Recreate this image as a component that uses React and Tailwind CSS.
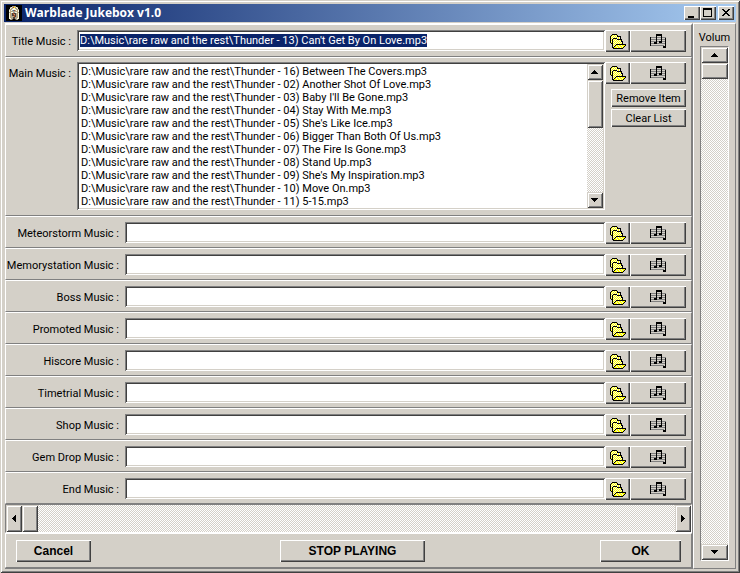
import { useEffect, useRef } from 'react';

const raised = 'bg-[#d4d0c8] shadow-[inset_1px_1px_#fff,inset_-1px_-1px_#404040,inset_-2px_-2px_#808080]';
const scrollRaised =
  'bg-[#d4d0c8] shadow-[inset_1px_1px_#d4d0c8,inset_-1px_-1px_#404040,inset_2px_2px_#fff,inset_-2px_-2px_#808080]';
const sunken = 'bg-white shadow-[inset_1px_1px_#808080,inset_-1px_-1px_#fff,inset_2px_2px_#404040,inset_-2px_-2px_#d4d0c8]';
const dither = 'bg-[repeating-conic-gradient(#fff_0_25%,#d4d0c8_0_50%)] bg-[length:2px_2px]';
const panel = 'border border-t-white border-l-white border-r-[#808080] border-b-[#808080]';

const songs = [
  '16) Between The Covers',
  '02) Another Shot Of Love',
  "03) Baby I'll Be Gone",
  '04) Stay With Me',
  "05) She's Like Ice",
  '06) Bigger Than Both Of Us',
  '07) The Fire Is Gone',
  '08) Stand Up',
  "09) She's My Inspiration",
  '10) Move On',
  '11) 5-15',
];
const path = (song) => `D:\\Music\\rare raw and the rest\\Thunder - ${song}.mp3`;

const slots = [
  'Meteorstorm', 'Memorystation', 'Boss', 'Promoted', 'Hiscore', 'Timetrial', 'Shop', 'Gem Drop', 'End',
];

const folderPixels = [
  '..KKKKK.........',
  '.KYWYWYK........',
  'KYWYWYWKKKK.....',
  'KWYWYWYWYWK.....',
  'KYWKKKKWYWK.....',
  'KWKYWYWKKKKK....',
  'KYKWYWYWYWYK....',
  'KWKYWYWYWYWKK...',
  'KYKWYWYWYWYWK...',
  '.KKYWYWYWYWYK...',
  '..KWYWKKKKKKKKKK',
  '..KYWKYYWYYWYYYK',
  '..KWKYWYYWYYWYK.',
  '..KKYYYWYYWYYK..',
  '...KKKKKKKKKK...',
];

const jukeboxPixels = [
  '................',
  '.....KGTTGK.....',
  '....GWTRYTWG....',
  '...KWTGWWGTWK...',
  '...GTGWWWWGTG...',
  '...WTWGBRGWTW...',
  '...WTGTGGTGTW...',
  '...GTWWGGWWTG...',
  '...WTGDRDDGTW...',
  '...WTGDRTDGTW...',
  '...WTGDDRDGTW...',
  '...WTGTTRDGTW...',
  '...WTGGDDGGTW...',
  '...WWTGDDGTWW...',
  '...KGGDKKDGGK...',
  '................',
];

const colors = {
  K: '#000000', Y: '#ffff00', W: '#f8f8e0', G: '#a4a498', T: '#c0a478', R: '#b04828', D: '#4c4034', B: '#3878a0',
};

function Pixels({ rows }) {
  return (
    <svg width="16" height={rows.length} viewBox={`0 0 16 ${rows.length}`} shapeRendering="crispEdges" aria-hidden="true">
      {rows.flatMap((row, y) =>
        [...row].map((c, x) => (colors[c] ? <rect key={`${x}-${y}`} x={x} y={y} width="1" height="1" fill={colors[c]} /> : null)),
      )}
    </svg>
  );
}

function NotesIcon() {
  return (
    <svg width="16" height="15" viewBox="0 0 16 15" shapeRendering="crispEdges" aria-hidden="true">
      <path fill="#808080" d="M0 3h16v1H0zM0 5h16v1H0zM0 7h16v1H0zM0 9h16v1H0zM0 11h14v1H0z" />
      <path
        fill="#000"
        d="M0 3h1v9H0zM6 0h6v2H6zM6 1h1v8H6zM11 1h1v7h-1zM4 8h3v2H4zM9 7h3v2H9zM15 4h1v9h-1zM13 12h3v2h-3z"
      />
    </svg>
  );
}

function Arrow({ d }) {
  return (
    <svg width="8" height="8" viewBox="0 0 8 8" shapeRendering="crispEdges" aria-hidden="true">
      <path d={d} />
    </svg>
  );
}
const up = 'M3 2h1v1H3zM2 3h3v1H2zM1 4h5v1H1zM0 5h7v1H0z';
const down = 'M0 2h7v1H0zM1 3h5v1H1zM2 4h3v1H2zM3 5h1v1H3z';
const left = 'M2 3h1v1H2zM3 2h1v3H3zM4 1h1v5H4zM5 0h1v7H5z';
const right = 'M2 0h1v7H2zM3 1h1v5H3zM4 2h1v3H4zM5 3h1v1H5z';

function ScrollButton({ label, d, className }) {
  return (
    <button type="button" aria-label={label} className={`flex shrink-0 items-center justify-center ${scrollRaised} ${className}`}>
      <Arrow d={d} />
    </button>
  );
}

function FileButtons({ name }) {
  return (
    <div className="flex h-[22px] shrink-0">
      <button type="button" aria-label={`Browse for ${name} music`} className={`flex w-[25px] items-center justify-center ${raised}`}>
        <Pixels rows={folderPixels} />
      </button>
      <button type="button" aria-label={`Play ${name} music`} className={`flex w-14 items-center justify-center ${raised}`}>
        <NotesIcon />
      </button>
    </div>
  );
}

function MusicRow({ name }) {
  const id = `${name.toLowerCase().replace(' ', '-')}-music`;
  return (
    <div className={`flex h-8 items-start pt-[5px] pr-[5px] ${panel}`}>
      <label htmlFor={id} className="w-[119px] shrink-0 pr-1.5 text-right leading-[23px]">{name} Music :</label>
      <input id={id} type="text" className={`h-[21px] min-w-0 flex-1 px-[3px] outline-none ${sunken}`} />
      <FileButtons name={name} />
    </div>
  );
}

function CaptionButton({ label, d }) {
  return (
    <button type="button" aria-label={label} className={`h-3.5 w-4 ${raised}`}>
      <svg width="16" height="14" viewBox="0 0 16 14" shapeRendering="crispEdges" aria-hidden="true">
        <path d={d} fillRule="evenodd" />
      </svg>
    </button>
  );
}

export default function App() {
  const title = useRef(null);
  useEffect(() => {
    title.current.focus();
    title.current.select();
  }, []);

  return (
    <main className='bg-[#d4d0c8] p-1 font-["Roboto",sans-serif] text-[11px] leading-[13px] text-black shadow-[inset_1px_1px_#d4d0c8,inset_-1px_-1px_#404040,inset_2px_2px_#fff,inset_-2px_-2px_#808080]'>
      <header className="flex h-[18px] items-center bg-linear-to-r/srgb from-[#0a246a] to-[#a6caf0] px-0.5">
        <span className="bg-black">
          <Pixels rows={jukeboxPixels} />
        </span>
        <h1 className='flex-1 pl-[3px] font-["Open_Sans",sans-serif] text-xs leading-4 font-bold text-white'>Warblade Jukebox v1.0</h1>
        <CaptionButton label="Minimize" d="M4 10h6v2H4z" />
        <CaptionButton label="Maximize" d="M3 2h9v9H3zM4 4h7v6H4z" />
        <span className="w-0.5" />
        <CaptionButton
          label="Close"
          d="M4 3h2v1H4zM10 3h2v1h-2zM5 4h2v1H5zM9 4h2v1H9zM6 5h4v1H6zM7 6h2v1H7zM6 7h4v1H6zM5 8h2v1H5zM9 8h2v1H9zM4 9h2v1H4zM10 9h2v1h-2z"
        />
      </header>

      <div className="mt-px ml-px flex">
        <form className="min-w-0 flex-1 border-t border-r border-b border-t-white border-r-[#808080] border-b-[#808080]">
          <div className={`flex h-[33px] items-start pt-[5px] pr-[5px] ${panel}`}>
            <label htmlFor="title-music" className="w-[71px] shrink-0 pr-1.5 text-right leading-[23px]">Title Music :</label>
            <input
              id="title-music"
              ref={title}
              type="text"
              defaultValue={path("13) Can't Get By On Love")}
              className={`h-[21px] min-w-0 flex-1 px-[3px] outline-none selection:bg-[#0a246a] selection:text-white ${sunken}`}
            />
            <FileButtons name="Title" />
          </div>

          <div className={`flex items-start pt-1 pr-[5px] pb-[5px] ${panel}`}>
            <label htmlFor="main-music" className="w-[71px] shrink-0 pr-1.5 text-right leading-[23px]">Main Music :</label>
            <div className={`flex h-[148px] min-w-0 flex-1 p-0.5 ${sunken}`}>
              <select
                id="main-music"
                multiple
                size={11}
                className="h-36 min-w-0 flex-1 appearance-none overflow-hidden bg-transparent p-0 pt-px outline-none"
              >
                {songs.map((song) => (
                  <option key={song} className="min-h-0 px-0.5 py-0 leading-[13px]">{path(song)}</option>
                ))}
              </select>
              <div className={`flex w-4 flex-col ${dither}`}>
                <ScrollButton label="Scroll up" d={up} className="h-4 w-4" />
                <div className={`h-12 w-4 ${scrollRaised}`} />
                <ScrollButton label="Scroll down" d={down} className="mt-auto h-4 w-4" />
              </div>
            </div>
            <div className="flex flex-col items-end">
              <FileButtons name="Main" />
              <button type="button" className={`mt-[5px] h-[18px] w-[75px] ${raised}`}>Remove Item</button>
              <button type="button" className={`mt-0.5 h-[18px] w-[75px] ${raised}`}>Clear List</button>
            </div>
          </div>

          {slots.map((name) => (
            <MusicRow key={name} name={name} />
          ))}

          <div className="flex h-[29px] border border-t-[#808080] border-r-white border-b-white border-l-[#808080]">
            <ScrollButton label="Back" d={left} className="w-4" />
            <input
              type="range"
              aria-label="Song position"
              defaultValue={0}
              className={`m-0 h-[27px] min-w-0 flex-1 appearance-none outline-none [&::-webkit-slider-thumb]:h-[27px] [&::-webkit-slider-thumb]:w-4 [&::-webkit-slider-thumb]:appearance-none [&::-webkit-slider-thumb]:bg-[#d4d0c8] [&::-webkit-slider-thumb]:shadow-[inset_1px_1px_#d4d0c8,inset_-1px_-1px_#404040,inset_2px_2px_#fff,inset_-2px_-2px_#808080] ${dither}`}
            />
            <ScrollButton label="Forward" d={right} className="w-4" />
          </div>

          <div className={`flex h-[35px] items-start px-2.5 pt-1.5 font-["Liberation_Sans",sans-serif] text-xs font-bold ${panel}`}>
            <button type="button" className={`h-[22px] w-[75px] ${raised}`}>Cancel</button>
            <span className="grow-[27]" />
            <button type="button" className={`h-[22px] w-[145px] ${raised}`}>STOP PLAYING</button>
            <span className="grow-[25]" />
            <button type="button" className={`h-[22px] w-[81px] ${raised}`}>OK</button>
          </div>
        </form>

        <aside className={`flex w-[43px] flex-col items-center pt-[7px] pb-[7px] ${panel}`}>
          <label htmlFor="volume">Volum</label>
          <div className="mt-0.5 flex w-[29px] flex-1 flex-col border border-t-[#808080] border-r-white border-b-white border-l-[#808080]">
            <ScrollButton label="Volume up" d={up} className="h-4 w-[27px]" />
            <input
              id="volume"
              type="range"
              defaultValue={0}
              className={`m-0 h-0 min-h-0 w-[27px] flex-1 appearance-none outline-none [writing-mode:vertical-lr] [&::-webkit-slider-thumb]:h-4 [&::-webkit-slider-thumb]:w-[27px] [&::-webkit-slider-thumb]:appearance-none [&::-webkit-slider-thumb]:bg-[#d4d0c8] [&::-webkit-slider-thumb]:shadow-[inset_1px_1px_#d4d0c8,inset_-1px_-1px_#404040,inset_2px_2px_#fff,inset_-2px_-2px_#808080] ${dither}`}
            />
            <ScrollButton label="Volume down" d={down} className="h-4 w-[27px]" />
          </div>
        </aside>
      </div>
    </main>
  );
}
